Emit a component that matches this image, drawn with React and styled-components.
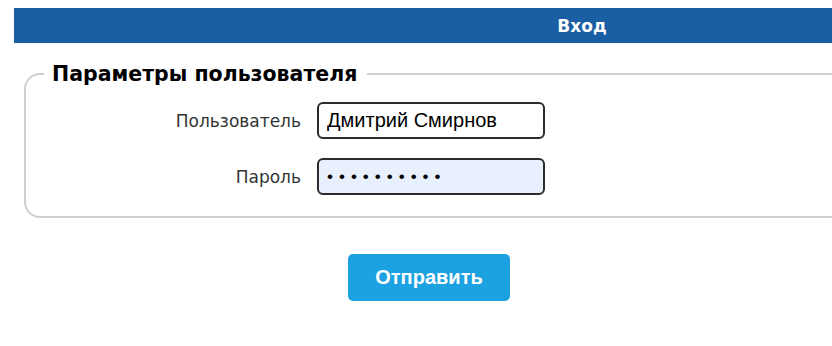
import styled, { createGlobalStyle } from 'styled-components';

const GlobalSt = createGlobalStyle`
  html, body {
    margin: 0;
    padding: 0;
    background: #fff;
    overflow: hidden;
  }
  body {
    font-family: "DejaVu Sans", "Noto Sans", sans-serif;
  }
`;

const PageSt = styled.div`
  width: 1150px;
  padding: 8px 0 0 14px;
`;

const HeaderSt = styled.div`
  width: 1136px;
  height: 35px;
  background: #1a5fa3;
  color: #fff;
  display: flex;
  align-items: center;
  justify-content: center;
  font-family: "DejaVu Sans", sans-serif;
  font-weight: bold;
  font-size: 17px;
`;

const FieldsetSt = styled.fieldset`
  width: 1100px;
  margin: 19px 0 0 10px;
  padding: 16px 0 21px 0;
  border: 2px solid #cfcfcf;
  border-radius: 16px;
  box-sizing: border-box;
`;

const LegendSt = styled.legend`
  margin-left: 18px;
  padding: 0 10px 0 8px;
  font-size: 20.5px;
  font-weight: bold;
  color: #000;
`;

const RowSt = styled.div`
  display: flex;
  align-items: center;
  gap: 16px;
  & + & {
    margin-top: 19px;
  }
`;

const LabelSt = styled.label`
  width: 275px;
  text-align: right;
  font-size: 17px;
  color: #333;
`;

const InputSt = styled.input`
  width: 228px;
  height: 37px;
  box-sizing: border-box;
  border: 2px solid #2b2b2b;
  border-radius: 6px;
  padding: 0 8px;
  font-family: "Liberation Sans", Arial, sans-serif;
  font-size: ${(props) => (props.type === 'password' ? '17px' : '20px')};
  color: #000;
  background: ${(props) => (props.filled ? '#e8f0fe' : '#fff')};
  outline: none;
  letter-spacing: ${(props) => (props.type === 'password' ? '6px' : 'normal')};
`;

const ActionsSt = styled.div`
  width: 830px;
  display: flex;
  justify-content: center;
  margin-top: 36px;
`;

const ButtonSt = styled.button`
  width: 162px;
  height: 47px;
  border: none;
  border-radius: 5px;
  background: #1ca1e1;
  color: #fff;
  font-family: "Liberation Sans", Arial, sans-serif;
  font-weight: bold;
  font-size: 20px;
  cursor: pointer;
`;

const App = () => {
  return (
    <PageSt>
      <GlobalSt />
      <HeaderSt>Вход</HeaderSt>
      <FieldsetSt>
        <LegendSt>Параметры пользователя</LegendSt>
        <RowSt>
          <LabelSt htmlFor="user">Пользователь</LabelSt>
          <InputSt id="user" type="text" defaultValue="Дмитрий Смирнов" />
        </RowSt>
        <RowSt>
          <LabelSt htmlFor="pass">Пароль</LabelSt>
          <InputSt id="pass" type="password" defaultValue="dmitrii123" filled />
        </RowSt>
      </FieldsetSt>
      <ActionsSt>
        <ButtonSt type="submit">Отправить</ButtonSt>
      </ActionsSt>
    </PageSt>
  );
};

export default App;
